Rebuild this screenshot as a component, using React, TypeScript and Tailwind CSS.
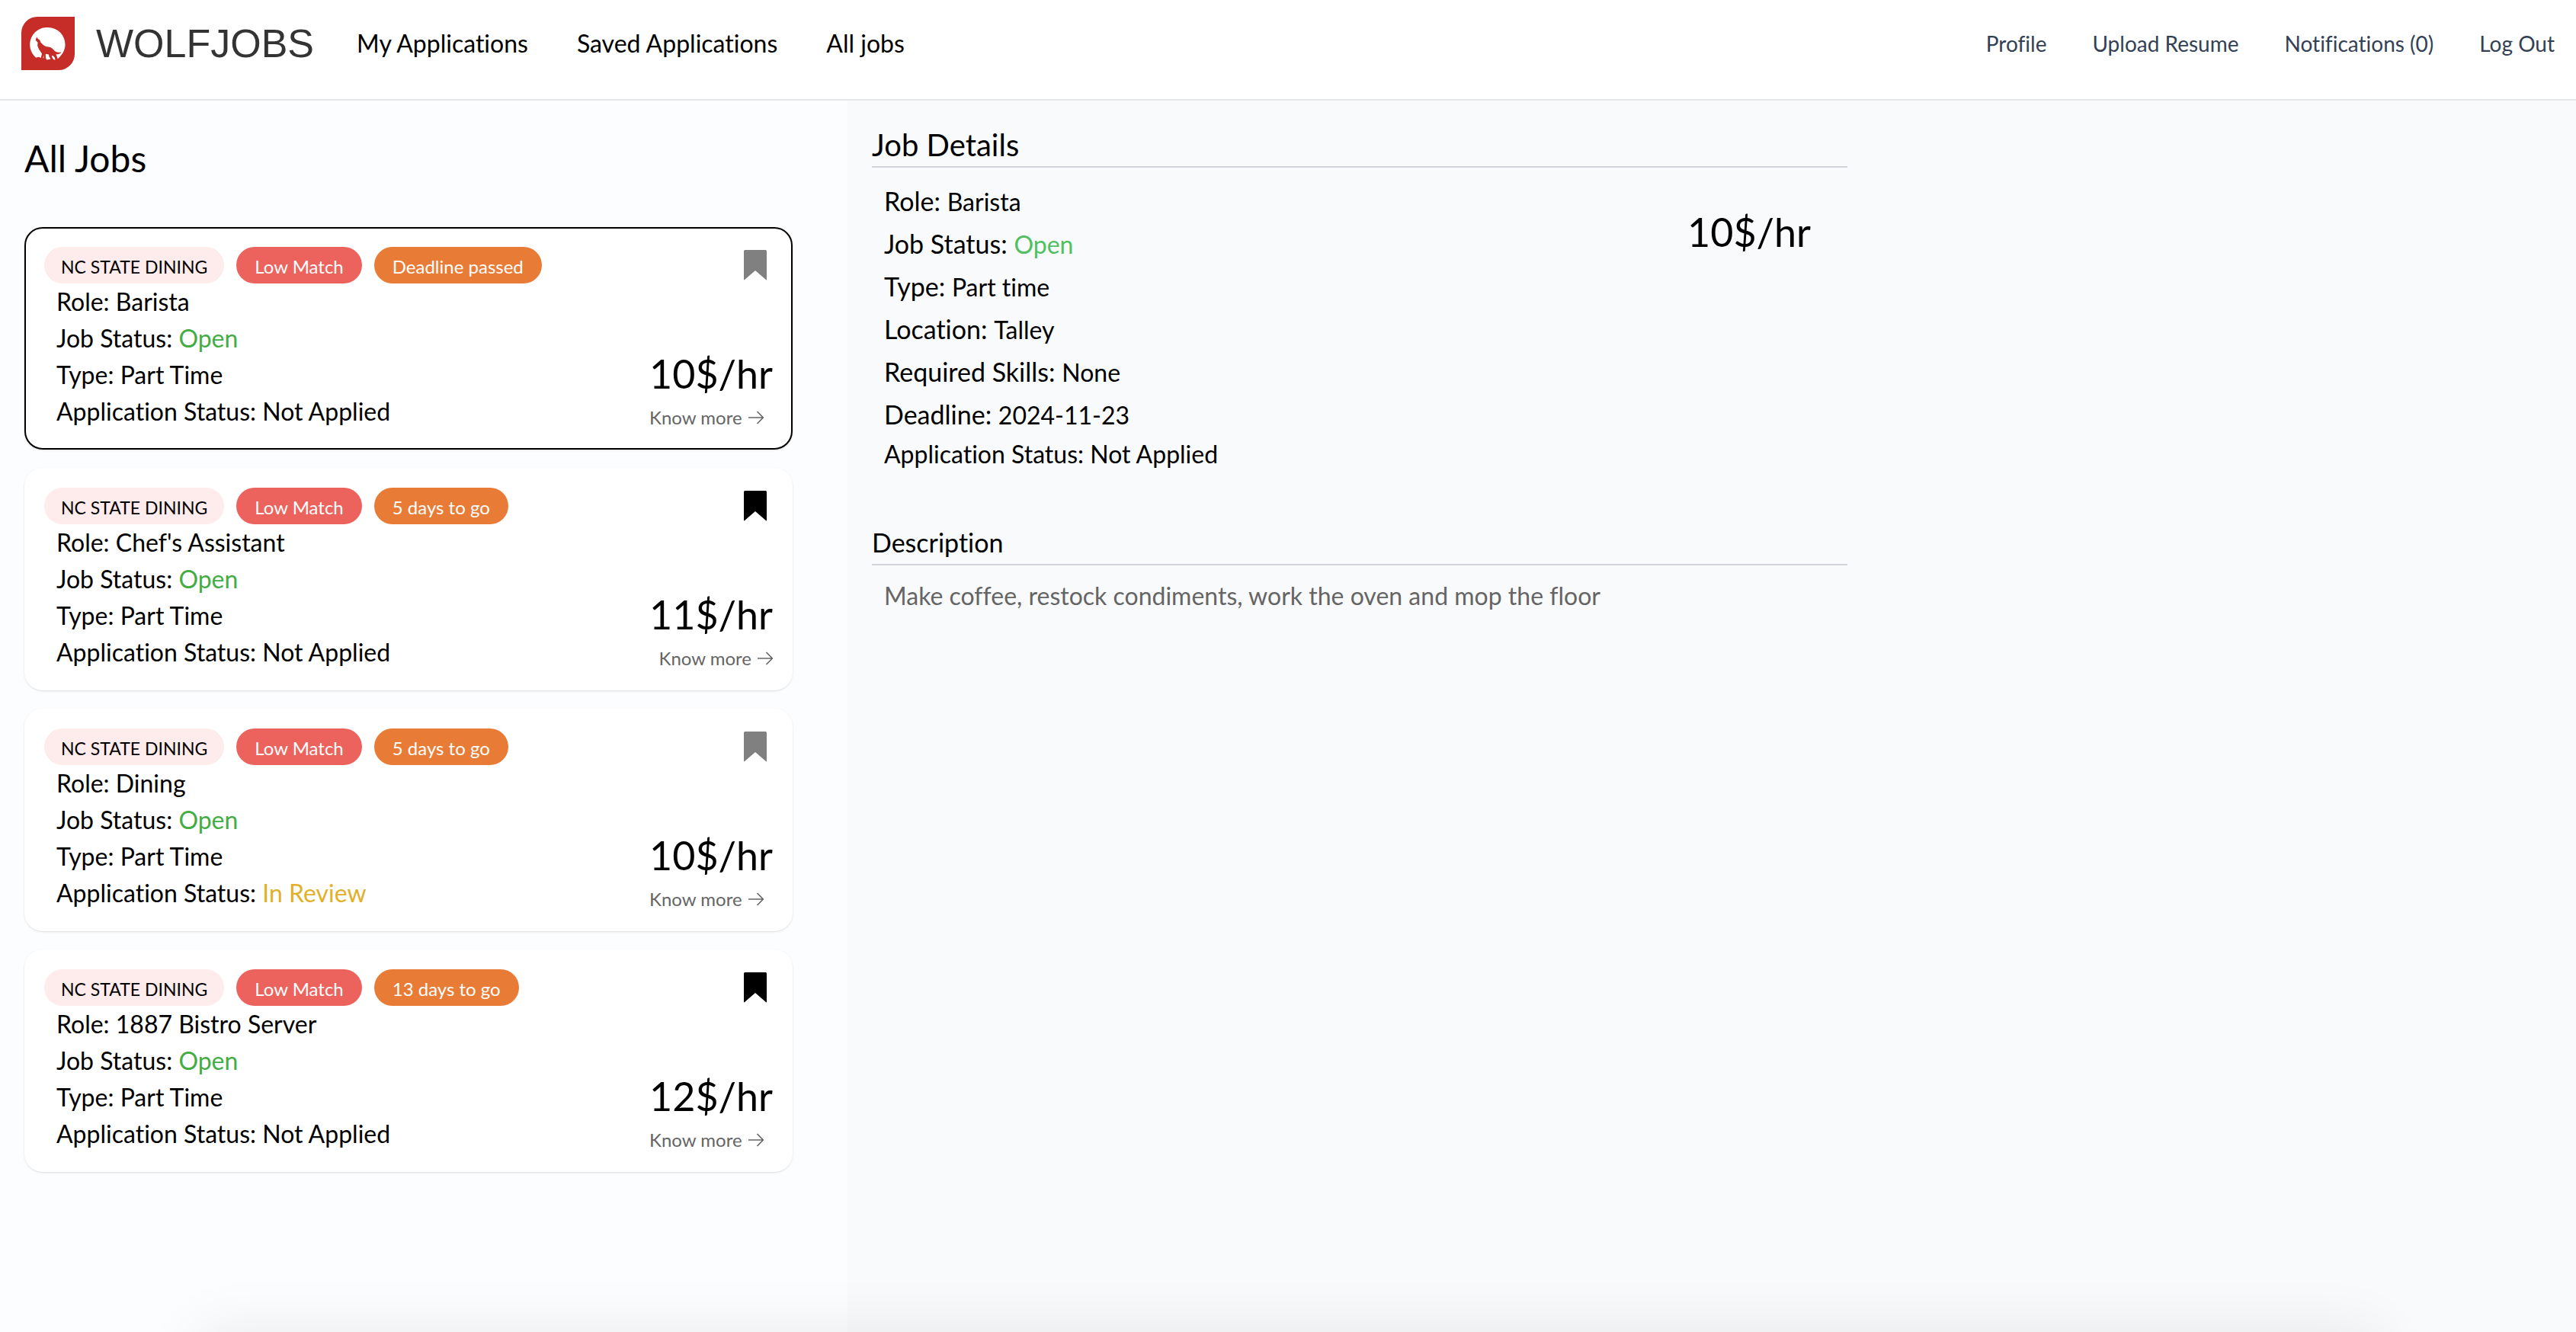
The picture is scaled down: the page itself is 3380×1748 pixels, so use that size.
type Job = {
  role: string;
  deadline: string;
  application: string;
  pay: string;
  saved: boolean;
  selected?: boolean;
};

const jobs: Job[] = [
  { role: "Barista", deadline: "Deadline passed", application: "Not Applied", pay: "10$/hr", saved: false, selected: true },
  { role: "Chef's Assistant", deadline: "5 days to go", application: "Not Applied", pay: "11$/hr", saved: true },
  { role: "Dining", deadline: "5 days to go", application: "In Review", pay: "10$/hr", saved: false },
  { role: "1887 Bistro Server", deadline: "13 days to go", application: "Not Applied", pay: "12$/hr", saved: true },
];

const details = [
  { label: "Role:", value: "Barista" },
  { label: "Job Status:", value: "Open", open: true },
  { label: "Type:", value: "Part time" },
  { label: "Location:", value: "Talley" },
  { label: "Required Skills:", value: "None" },
  { label: "Deadline:", value: "2024-11-23" },
];

function Logo() {
  return (
    <svg viewBox="0 0 70 70" className="size-[70px]" aria-hidden="true">
      <path d="M21 0H70V49A21 21 0 0 1 49 70H0V21A21 21 0 0 1 21 0Z" fill="#c62d28" />
      <path
        d="M35 14A22.500 22.500 0 0 1 57.500 36.500C57.500 44 53.500 50 48.500 54.500L44.500 56.500L41 56L23 53.500L19 53.500A22.500 22.500 0 0 1 35 14Z"
        fill="#fff"
      />
      <path
        d="M20.300 26.500L21.300 28.500L24.200 30.500L25.300 33.500C27.500 36 30 38.500 33 39.200C37 39.300 40.500 40.500 42.500 43.500C44 46 47.500 47.800 52.500 46.300C51 48.800 48.500 49.600 45.500 49.300C46.500 51.500 47.300 53.500 47.500 56.500L44.500 57C44.500 54.500 43.500 52.500 41 50.800L39.800 52L42 56H39L36.500 52.500L36 49.500L31.800 48.800L32 55H29.500L29.200 50L28.500 54.500L25.500 54.800L27 48.500L23 42.500L21.200 38L21.500 33.500L18.800 31L19.300 28.500Z"
        fill="#c62d28"
      />
      <path d="M20.500 53.500C22.500 52 24.500 53 25.500 54.500L42 55.500L41.500 59H17.500Z" fill="#c62d28" />
      <path d="M32.500 52.500L35.500 52L38 55.800L33 56.500Z" fill="#fff" />
    </svg>
  );
}

function Bookmark({ saved }: { saved: boolean }) {
  return (
    <button type="button" aria-label={saved ? "Remove saved job" : "Save job"} className="mt-1 mr-2">
      <svg viewBox="0 0 30 40" className="block h-10 w-[30px]" fill={saved ? "#000" : "#808080"}>
        <path d="M1.500 0H28.500A1.500 1.500 0 0 1 30 1.500V38.600Q30 40 28.900 39L15 27L1.100 39Q0 40 0 38.600V1.500A1.500 1.500 0 0 1 1.500 0Z" />
      </svg>
    </button>
  );
}

function JobCard({ job }: { job: Job }) {
  return (
    <li
      className={
        "flex justify-between rounded-3xl border-2 bg-white p-6 shadow-sm " +
        (job.selected ? "border-black" : "border-white")
      }
    >
      <div>
        <div className="flex gap-4 text-2xl leading-[44px] text-white">
          <span className="rounded-full bg-[#feebeb] px-[22px] pt-1 text-[23px] leading-[44px] text-black">
            NC STATE DINING
          </span>
          <span className="rounded-full bg-[#ec625d] px-6 pt-1">Low Match</span>
          <span className="rounded-full bg-[#e87c36] px-6 pt-1">{job.deadline}</span>
        </div>
        <div className="pl-4 text-[32px] leading-[48px]">
          <p>Role: {job.role}</p>
          <p>
            Job Status: <span className="text-[#43ad43]">Open</span>
          </p>
          <p>Type: Part Time</p>
          <p>
            Application Status:{" "}
            <span className={job.application === "In Review" ? "text-[#e2b02a]" : ""}>{job.application}</span>
          </p>
        </div>
      </div>
      <div className="flex flex-col items-end justify-between">
        <Bookmark saved={job.saved} />
        <div className="flex flex-col gap-3">
          <p className="text-[52px] leading-[60px]">{job.pay}</p>
          <button
            type="button"
            className={
              "flex items-center gap-2 text-2xl leading-8 text-[#656565] " +
              (job.pay.startsWith("11") ? "self-end" : "self-start")
            }
          >
            Know more
            <svg viewBox="0 0 20 20" className="size-5" fill="none" stroke="currentColor" strokeWidth="1.600">
              <path d="M0 10H19M11.500 2L19.300 10L11.500 18" />
            </svg>
          </button>
        </div>
      </div>
    </li>
  );
}

export default function App() {
  return (
    <div className="flex min-h-screen flex-col overflow-hidden bg-[#f9fafc] font-['Lato',sans-serif] text-black [font-variant-ligatures:none]">
      <header className="flex items-center justify-between border-b-2 border-[#e5e7eb] bg-white px-7 pt-[22px] pb-[38px]">
        <div className="flex items-center">
          <a href="#home" className="flex items-center gap-7">
            <Logo />
            <span className="font-['Liberation_Sans',sans-serif] text-[52px] leading-[70px] text-[#333]">WOLFJOBS</span>
          </a>
          <nav aria-label="Jobs" className="ml-14 flex gap-16 text-[32px] leading-[48px]">
            <a href="#applications">My Applications</a>
            <a href="#saved">Saved Applications</a>
            <a href="#jobs">All jobs</a>
          </nav>
        </div>
        <nav aria-label="Account" className="flex gap-[60px] text-[28px] leading-10 text-[#334155]">
          <a href="#profile">Profile</a>
          <a href="#resume">Upload Resume</a>
          <a href="#notifications">Notifications (0)</a>
          <a href="#logout">Log Out</a>
        </nav>
      </header>

      <div className="flex grow">
        <aside className="w-[32.9%] shrink-0 bg-[#fcfdff] pt-10 pr-[72px] pl-8">
          <h1 className="text-5xl leading-[72px]">All Jobs</h1>
          <ul className="mt-[54px] flex flex-col gap-6">
            {jobs.map((job) => (
              <JobCard key={job.role} job={job} />
            ))}
          </ul>
        </aside>

        <main className="grow px-8 pt-[30px]">
          <div className="max-w-7xl">
            <h2 className="border-b-2 border-[#d1d5db] text-[40px] leading-[56px]">Job Details</h2>
            <div className="flex justify-between">
              <div className="mt-4 pl-4 text-[32px] leading-[48px]">
                {details.map((d) => (
                  <p key={d.label} className="text-[34px] leading-[56px]">
                    {d.label}{" "}
                    <span className={d.open ? "text-[32px] leading-none text-[#4fc060]" : "text-[32px] leading-none"}>
                      {d.value}
                    </span>
                  </p>
                ))}
                <p>Application Status: Not Applied</p>
              </div>
              <p className="pt-[54px] pr-12 text-[52px] leading-[60px]">10$/hr</p>
            </div>
            <h3 className="mt-16 border-b-2 border-[#d1d5db] text-[34px] leading-[56px]">Description</h3>
            <p className="mt-4 pl-4 text-[32px] leading-[48px] text-[#656565]">
              Make coffee, restock condiments, work the oven and mop the floor
            </p>
          </div>
        </main>
      </div>

      <div
        aria-hidden="true"
        className="pointer-events-none fixed inset-x-[260px] -bottom-40 h-40 shadow-[0_0_80px_rgba(0,0,0,0.08)]"
      />
    </div>
  );
}
